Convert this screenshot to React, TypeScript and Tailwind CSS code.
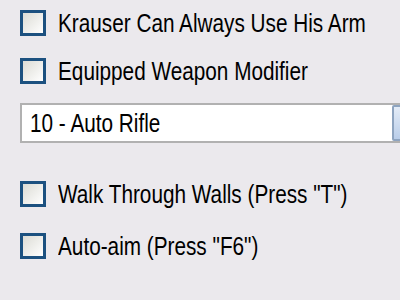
const font = { fontFamily: '"Liberation Sans", Arial, sans-serif' }

function Check({ label }: { label: string }) {
  return (
    <label className="flex h-[26px] items-center whitespace-nowrap">
      <span className="h-[26px] w-[26px] shrink-0 border-[3px] border-[#1c5180] bg-gradient-to-br from-[#dcdcd5] to-white" />
      <span className="ml-[12px] inline-block origin-left scale-x-[0.83] text-[25px] leading-none text-black">{label}</span>
    </label>
  )
}

export default function App() {
  return (
    <div className="h-[300px] w-[400px] overflow-hidden bg-[#ebe9ed] pl-[20px] pt-[10px]" style={font}>
      <Check label="Krauser Can Always Use His Arm" />
      <div className="mt-[22px]">
        <Check label="Equipped Weapon Modifier" />
      </div>
      <div className="mt-[19px] flex h-[40px] w-[400px] items-center whitespace-nowrap border-2 border-[#b1b1b1] bg-white">
        <span className="ml-[8px] inline-block flex-1 origin-left scale-x-[0.83] text-[25px] leading-none text-black">10 - Auto Rifle</span>
        <span className="mr-[-4px] h-[36px] w-[30px] rounded-[2px] border-2 border-[#8ea4c0] bg-gradient-to-b from-[#e4ecf7] to-[#b9cde9]" />
      </div>
      <div className="mt-[38px]">
        <Check label={'Walk Through Walls (Press "T")'} />
      </div>
      <div className="mt-[26px]">
        <Check label={'Auto-aim (Press "F6")'} />
      </div>
    </div>
  )
}
